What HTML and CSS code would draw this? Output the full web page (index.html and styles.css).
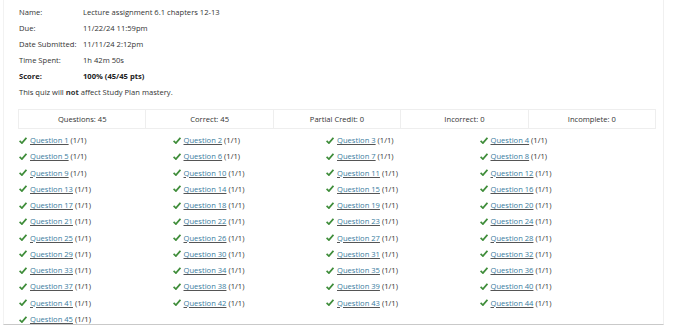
FILE: index.html
```html
<!DOCTYPE html>
<html>

<head>
    <link rel="stylesheet" href="styles.css">
</head>

<body>
    <div class="page">
        <div class="info">
            <div class="info-row"><span class="label">Name:</span><span>Lecture assignment 6.1 chapters 12-13</span></div>
            <div class="info-row"><span class="label">Due:</span><span>11/22/24 11:59pm</span></div>
            <div class="info-row"><span class="label">Date Submitted:</span><span>11/11/24 2:12pm</span></div>
            <div class="info-row"><span class="label">Time Spent:</span><span>1h 42m 50s</span></div>
            <div class="info-row bold"><span class="label">Score:</span><span>100% (45/45 pts)</span></div>
            <div class="info-row">This quiz will&nbsp;<b>not</b>&nbsp;affect Study Plan mastery.</div>
        </div>

        <div class="stats">
            <div class="stat">Questions: 45</div>
            <div class="stat">Correct: 45</div>
            <div class="stat">Partial Credit: 0</div>
            <div class="stat">Incorrect: 0</div>
            <div class="stat">Incomplete: 0</div>
        </div>

        <div class="questions" id="questions"></div>
    </div>

    <script>
        const list = document.getElementById('questions');
        for (let i = 1; i <= 45; i++) {
            const item = document.createElement('div');
            item.classList.add('question');
            item.innerHTML = `<svg class="check" viewBox="0 0 8 7"><path d="M0.6 3.9 L2.9 6.1 L7.4 0.8" fill="none" stroke="#3f8d3a" stroke-width="1.7"/></svg><a href="#">Question ${i}</a>&nbsp;(1/1)`;
            list.appendChild(item);
        }
    </script>
</body>

</html>
```

FILE: styles.css
```css
body {
    margin: 0;
    background: #ffffff;
    font-family: "Open Sans", sans-serif;
    font-size: 7.6px;
    color: #333333;
    overflow: hidden;
}

.page {
    margin-left: 3px;
    width: 661px;
    height: 325px;
    padding: 4px 0 0 14px;
    box-sizing: border-box;
    border-left: 1px solid #f2f2f2;
    border-right: 1px solid #f0f0f0;
    border-bottom: 1px solid #c9c9c9;
    box-shadow: 0 2px 0 #ecebe8;
}

.info-row {
    display: flex;
    line-height: 16px;
    height: 16px;
    padding-left: 1px;
}

.label {
    width: 64px;
}

.bold {
    font-weight: bold;
    color: #222;
}

.stats {
    display: flex;
    margin-top: 9px;
    width: 638px;
    border: 1px solid #eeeeee;
    box-sizing: border-box;
}

.stat {
    flex: 1;
    text-align: center;
    line-height: 18px;
    border-left: 1px solid #eeeeee;
}

.stat:first-child {
    border-left: none;
}

.questions {
    display: flex;
    flex-wrap: wrap;
    margin-top: 3px;
    width: 640px;
}

.question {
    width: 153.5px;
    height: 16.27px;
    line-height: 16.27px;
    display: flex;
    align-items: center;
    padding-left: 1px;
    box-sizing: border-box;
}

.check {
    width: 8px;
    height: 7px;
    margin-right: 3px;
}

.question a {
    color: #3a7da0;
    text-decoration: underline;
    text-decoration-color: #555;
}
```
